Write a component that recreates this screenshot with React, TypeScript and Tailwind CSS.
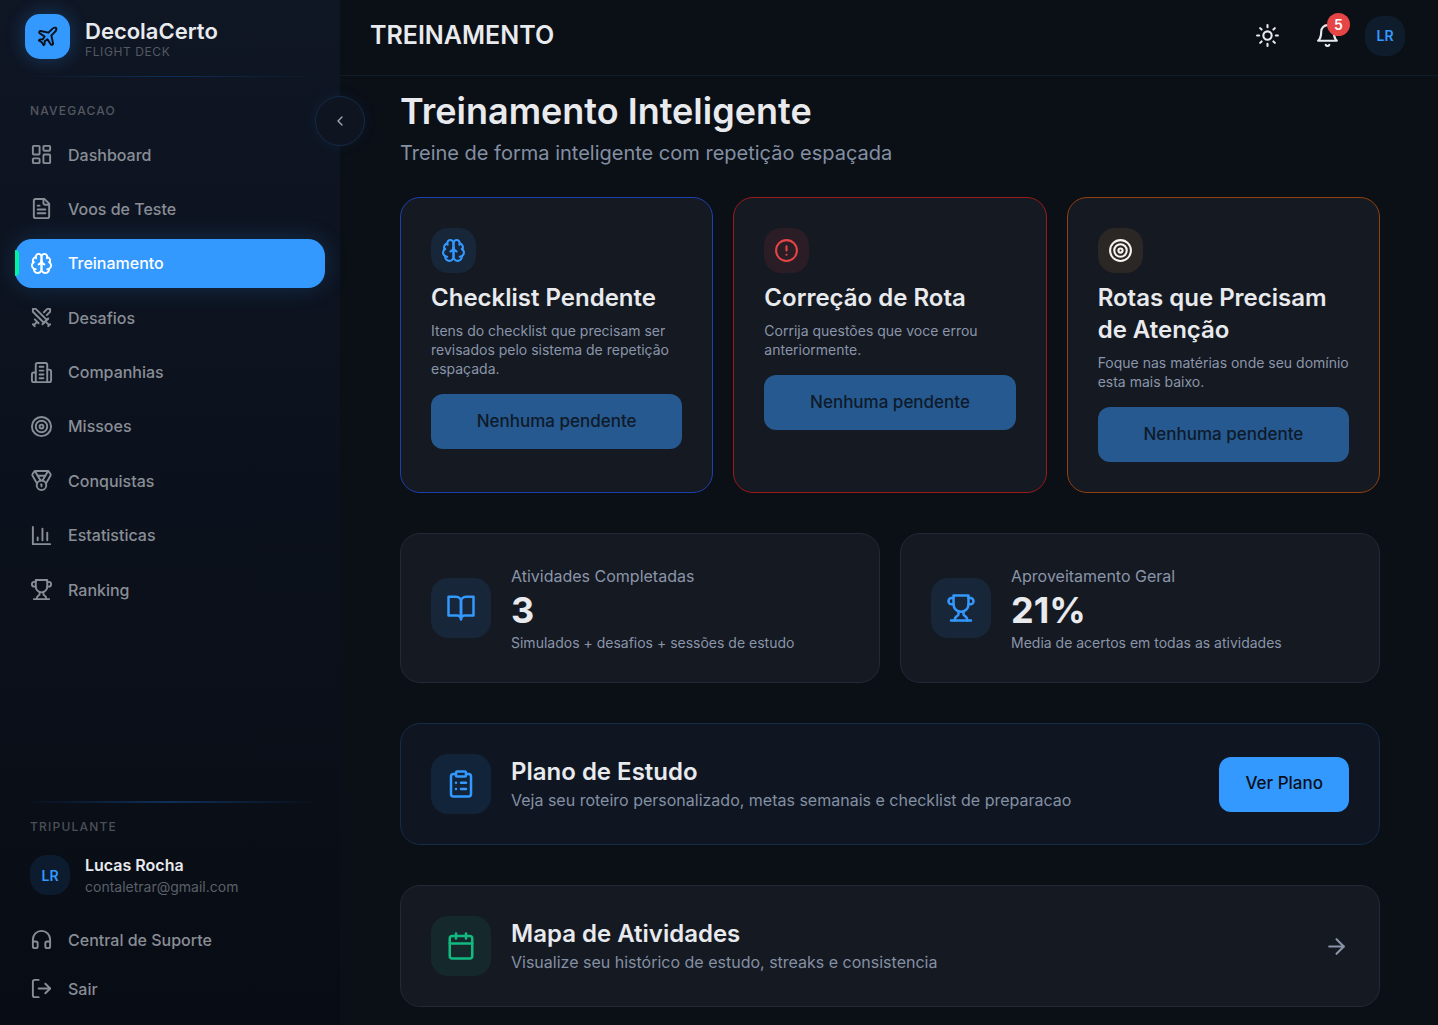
import type { ReactNode } from 'react';
import {
  ArrowRight,
  Calendar,
  ChevronLeft,
  ClipboardList,
  Headphones,
  LayoutDashboard,
  LogOut,
  Medal,
  Plane,
  Sun,
  Swords,
  Target,
} from 'lucide-react';

type IconProps = { size?: number; className?: string };

function Svg({ size = 24, className, children }: IconProps & { children: ReactNode }) {
  return (
    <svg
      width={size}
      height={size}
      viewBox="0 0 24 24"
      fill="none"
      stroke="currentColor"
      strokeWidth={2}
      strokeLinecap="round"
      strokeLinejoin="round"
      className={className}
      aria-hidden="true"
    >
      {children}
    </svg>
  );
}

const Brain = (props: IconProps) => (
  <Svg {...props}>
    <path d="M12 5a3 3 0 1 0-5.997.125 4 4 0 0 0-2.526 5.77 4 4 0 0 0 .556 6.588A4 4 0 1 0 12 18Z" />
    <path d="M12 5a3 3 0 1 1 5.997.125 4 4 0 0 1 2.526 5.77 4 4 0 0 1-.556 6.588A4 4 0 1 1 12 18Z" />
    <path d="M15 13a4.5 4.5 0 0 1-3-4 4.5 4.5 0 0 1-3 4" />
    <path d="M17.599 6.5a3 3 0 0 0 .399-1.375M6.003 5.125A3 3 0 0 0 6.401 6.5" />
    <path d="M3.477 10.896a4 4 0 0 1 .585-.396M19.938 10.5a4 4 0 0 1 .585.396" />
    <path d="M6 18a4 4 0 0 1-1.967-.516M19.967 17.484A4 4 0 0 1 18 18" />
  </Svg>
);

const FileText = (props: IconProps) => (
  <Svg {...props}>
    <path d="M15 2H6a2 2 0 0 0-2 2v16a2 2 0 0 0 2 2h12a2 2 0 0 0 2-2V7Z" />
    <path d="M14 2v4a2 2 0 0 0 2 2h4" />
    <path d="M10 9H8M16 13H8M16 17H8" />
  </Svg>
);

const Building = (props: IconProps) => (
  <Svg {...props}>
    <path d="M6 22V4a2 2 0 0 1 2-2h8a2 2 0 0 1 2 2v18Z" />
    <path d="M6 12H4a2 2 0 0 0-2 2v6a2 2 0 0 0 2 2h2" />
    <path d="M18 9h2a2 2 0 0 1 2 2v9a2 2 0 0 1-2 2h-2" />
    <path d="M10 6h4M10 10h4M10 14h4M10 18h4" />
  </Svg>
);

const BarChart = (props: IconProps) => (
  <Svg {...props}>
    <path d="M3 3v18h18M18 17V9M13 17V5M8 17v-3" />
  </Svg>
);

const Trophy = (props: IconProps) => (
  <Svg {...props}>
    <path d="M6 9H4.5a2.5 2.5 0 0 1 0-5H6M18 9h1.5a2.5 2.5 0 0 0 0-5H18M4 22h16" />
    <path d="M10 14.66V17c0 .55-.47.98-.97 1.21C7.85 18.75 7 20.24 7 22" />
    <path d="M14 14.66V17c0 .55.47.98.97 1.21C16.15 18.75 17 20.24 17 22" />
    <path d="M18 2H6v7a6 6 0 0 0 12 0V2Z" />
  </Svg>
);

const BookOpen = (props: IconProps) => (
  <Svg {...props}>
    <path d="M2 3h6a4 4 0 0 1 4 4v14a3 3 0 0 0-3-3H2z" />
    <path d="M22 3h-6a4 4 0 0 0-4 4v14a3 3 0 0 1 3-3h7z" />
  </Svg>
);

const Bell = (props: IconProps) => (
  <Svg {...props}>
    <path d="M6 8a6 6 0 0 1 12 0c0 7 3 9 3 9H3s3-2 3-9" />
    <path d="M10.3 21a1.94 1.94 0 0 0 3.4 0" />
  </Svg>
);

const AlertCircle = (props: IconProps) => (
  <Svg {...props}>
    <circle cx="12" cy="12" r="10" />
    <path d="M12 8v4M12 16h.01" />
  </Svg>
);

const NAV_ITEMS = [
  { label: 'Dashboard', icon: LayoutDashboard },
  { label: 'Voos de Teste', icon: FileText },
  { label: 'Treinamento', icon: Brain, active: true },
  { label: 'Desafios', icon: Swords },
  { label: 'Companhias', icon: Building },
  { label: 'Missoes', icon: Target },
  { label: 'Conquistas', icon: Medal },
  { label: 'Estatisticas', icon: BarChart },
  { label: 'Ranking', icon: Trophy },
];

const TRAINING_CARDS = [
  {
    title: 'Checklist Pendente',
    text: 'Itens do checklist que precisam ser revisados pelo sistema de repetição espaçada.',
    icon: Brain,
    border: 'border-[#1e40af]',
    tint: 'bg-[#18263a] text-[#3399ff]',
  },
  {
    title: 'Correção de Rota',
    text: 'Corrija questões que voce errou anteriormente.',
    icon: AlertCircle,
    border: 'border-[#991b1b]',
    tint: 'bg-[#2a1d26] text-[#e54545]',
  },
  {
    title: 'Rotas que Precisam de Atenção',
    text: 'Foque nas matérias onde seu domínio esta mais baixo.',
    icon: Target,
    border: 'border-[#92400e]',
    tint: 'bg-[#2b2724] text-[#f5f5f0]',
  },
];

const STATS = [
  { label: 'Atividades Completadas', value: '3', hint: 'Simulados + desafios + sessões de estudo', icon: BookOpen },
  { label: 'Aproveitamento Geral', value: '21%', hint: 'Media de acertos em todas as atividades', icon: Trophy },
];

function Divider({ className }: { className: string }) {
  return <div className={`mx-5 bg-gradient-to-r from-transparent via-[#0e2f58] to-transparent ${className}`} />;
}

function Sidebar() {
  return (
    <aside className="sticky top-0 z-10 flex h-screen w-[340px] shrink-0 flex-col bg-gradient-to-b from-[#0f1624] to-[#080c14]">
      <div className="flex h-[76px] items-center gap-[15px] px-[25px] pb-[3px]">
        <div className="flex size-[45px] items-center justify-center rounded-[15px] bg-[#3399ff] text-[#0b0f17] shadow-[0_0_20px_rgba(51,153,255,0.3)]">
          <Plane size={23} />
        </div>
        <div className="pt-[3px]">
          <p className="text-[22px] leading-[26px] font-semibold text-[#e8eaed]">DecolaCerto</p>
          <p className="text-[12px] leading-[15px] tracking-wider text-[#545962]">FLIGHT DECK</p>
        </div>
      </div>
      <Divider className="h-px" />

      <button
        type="button"
        aria-label="Recolher menu"
        className="absolute top-24 -right-[25px] flex size-[50px] items-center justify-center rounded-full border border-[#142a48] bg-[#0e1521] text-[#a3a9b3] shadow-[0_0_15px_rgba(51,153,255,0.08)]"
      >
        <ChevronLeft size={16} />
      </button>

      <p className="mt-6 px-[30px] text-[12px] leading-5 font-medium tracking-widest text-[#545860]">NAVEGACAO</p>
      <nav className="mt-[9px] flex h-[484px] flex-col justify-between px-[15px]">
        {NAV_ITEMS.map(({ label, icon: Icon, active }) => (
          <a
            key={label}
            href="#"
            className={`relative flex h-[49px] items-center gap-[15px] rounded-[17px] px-[15px] text-[16px] font-medium ${
              active ? 'bg-[#3399ff] text-white shadow-[0_0_25px_rgba(51,153,255,0.2)]' : 'text-[#898e96]'
            }`}
          >
            {active && <span className="absolute left-0 h-[26px] w-1 rounded-r-full bg-[#00f5a0]" />}
            <Icon size={23} />
            {label}
          </a>
        ))}
      </nav>

      <div className="mt-auto pb-3">
        <Divider className="h-0.5" />
        <p className="mt-[14px] px-[30px] text-[12px] leading-5 font-medium tracking-widest text-[#4c5058]">TRIPULANTE</p>
        <div className="mt-4 mb-[18px] flex items-center gap-[15px] px-[30px]">
          <div className="flex size-10 items-center justify-center rounded-[17px] bg-[#0d1b2e] text-[14px] font-semibold text-[#3399ff]">
            LR
          </div>
          <div>
            <p className="text-[16px] leading-6 font-semibold text-[#e8eaed]">Lucas Rocha</p>
            <p className="text-[14px] leading-5 text-[#5b6068]">contaletrar@gmail.com</p>
          </div>
        </div>
        <a href="#" className="flex h-[49px] items-center gap-[15px] px-[30px] text-[16px] font-medium text-[#898e96]">
          <Headphones size={23} />
          Central de Suporte
        </a>
        <button type="button" className="flex h-[49px] w-full items-center gap-[15px] px-[30px] text-[16px] font-medium text-[#898e96]">
          <LogOut size={23} />
          Sair
        </button>
      </div>
    </aside>
  );
}

function Header() {
  return (
    <header className="flex h-[76px] items-center justify-between border-b border-[#111c29] pr-[33px] pb-1 pl-[30px]">
      <p className="text-[25px] font-semibold text-[#e8eaed]">TREINAMENTO</p>
      <div className="flex items-center text-[#e8eaed]">
        <button type="button" aria-label="Alternar tema" className="flex size-[60px] items-center justify-center">
          <Sun size={25} />
        </button>
        <button type="button" aria-label="Notificações" className="relative flex size-[60px] items-center justify-center">
          <Bell size={25} />
          <span className="absolute top-[7px] right-[7px] flex size-[23px] items-center justify-center rounded-full bg-[#e54545] text-[14px] font-semibold text-white">
            5
          </span>
        </button>
        <button
          type="button"
          className="ml-2 flex size-10 items-center justify-center rounded-[17px] bg-[#0e1c2c] text-[14px] font-semibold text-[#3399ff]"
        >
          LR
        </button>
      </div>
    </header>
  );
}

function IconTile({ tint, children }: { tint: string; children: ReactNode }) {
  return <div className={`flex size-[60px] shrink-0 items-center justify-center rounded-[17px] ${tint}`}>{children}</div>;
}

export default function App() {
  return (
    <div className="flex min-h-screen bg-[#0b0f16] font-['Inter',sans-serif]">
      <Sidebar />
      <div className="min-w-0 flex-1">
        <Header />
        <main className="flex flex-col gap-10 pt-[13px] pr-[58px] pb-[18px] pl-[60px]">
          <section>
            <h1 className="text-[36px] leading-[45px] font-semibold text-[#e8eaed]">Treinamento Inteligente</h1>
            <p className="mt-1 text-[20px] leading-[30px] text-[#8490a3]">Treine de forma inteligente com repetição espaçada</p>
            <div className="mt-[29px] grid grid-cols-3 gap-5">
              {TRAINING_CARDS.map(({ title, text, icon: Icon, border, tint }) => (
                <article key={title} className={`rounded-[20px] border bg-[#151922] p-[30px] ${border}`}>
                  <div className={`flex size-[45px] items-center justify-center rounded-[17px] ${tint}`}>
                    <Icon size={25} />
                  </div>
                  <h2 className="mt-[9px] text-[24px] leading-8 font-semibold text-[#e8eaed]">{title}</h2>
                  <p className="mt-[7px] text-[14px] leading-[19px] text-[#8a95a9]">{text}</p>
                  <button
                    type="button"
                    disabled
                    className="mt-4 h-[55px] w-full rounded-xl bg-[#255990] text-[17px] font-medium text-[#0f1a29]"
                  >
                    Nenhuma pendente
                  </button>
                </article>
              ))}
            </div>
          </section>

          <section className="grid grid-cols-2 gap-5">
            {STATS.map(({ label, value, hint, icon: Icon }) => (
              <article key={label} className="flex items-center gap-5 rounded-[20px] border border-[#252933] bg-[#151922] p-[30px]">
                <IconTile tint="bg-[#18263a] text-[#3399ff]">
                  <Icon size={30} />
                </IconTile>
                <div>
                  <p className="text-[16px] leading-6 text-[#8a95a9]">{label}</p>
                  <p className="text-[36px] leading-[45px] font-bold text-[#e8eaed]">{value}</p>
                  <p className="text-[14px] leading-[19px] text-[#8a95a9]">{hint}</p>
                </div>
              </article>
            ))}
          </section>

          <section className="flex items-center gap-5 rounded-[20px] border border-[#132c48] bg-[#0f1622] p-[30px]">
            <IconTile tint="bg-[#12243a] text-[#3399ff]">
              <ClipboardList size={30} />
            </IconTile>
            <div className="flex-1">
              <h2 className="text-[24px] leading-8 font-semibold text-[#e8eaed]">Plano de Estudo</h2>
              <p className="text-[16px] leading-6 text-[#8490a3]">
                Veja seu roteiro personalizado, metas semanais e checklist de preparacao
              </p>
            </div>
            <button type="button" className="h-[55px] rounded-xl bg-[#3399ff] px-[26px] text-[17px] font-medium text-[#0b0f17]">
              Ver Plano
            </button>
          </section>

          <a href="#" className="flex items-center gap-5 rounded-[20px] border border-[#252933] bg-[#151922] p-[30px]">
            <IconTile tint="bg-[#15292d] text-[#12b981]">
              <Calendar size={30} />
            </IconTile>
            <div className="flex-1">
              <h2 className="text-[24px] leading-8 font-semibold text-[#e8eaed]">Mapa de Atividades</h2>
              <p className="text-[16px] leading-6 text-[#8490a3]">Visualize seu histórico de estudo, streaks e consistencia</p>
            </div>
            <ArrowRight size={25} className="text-[#8a95a9]" />
          </a>
        </main>
      </div>
    </div>
  );
}
